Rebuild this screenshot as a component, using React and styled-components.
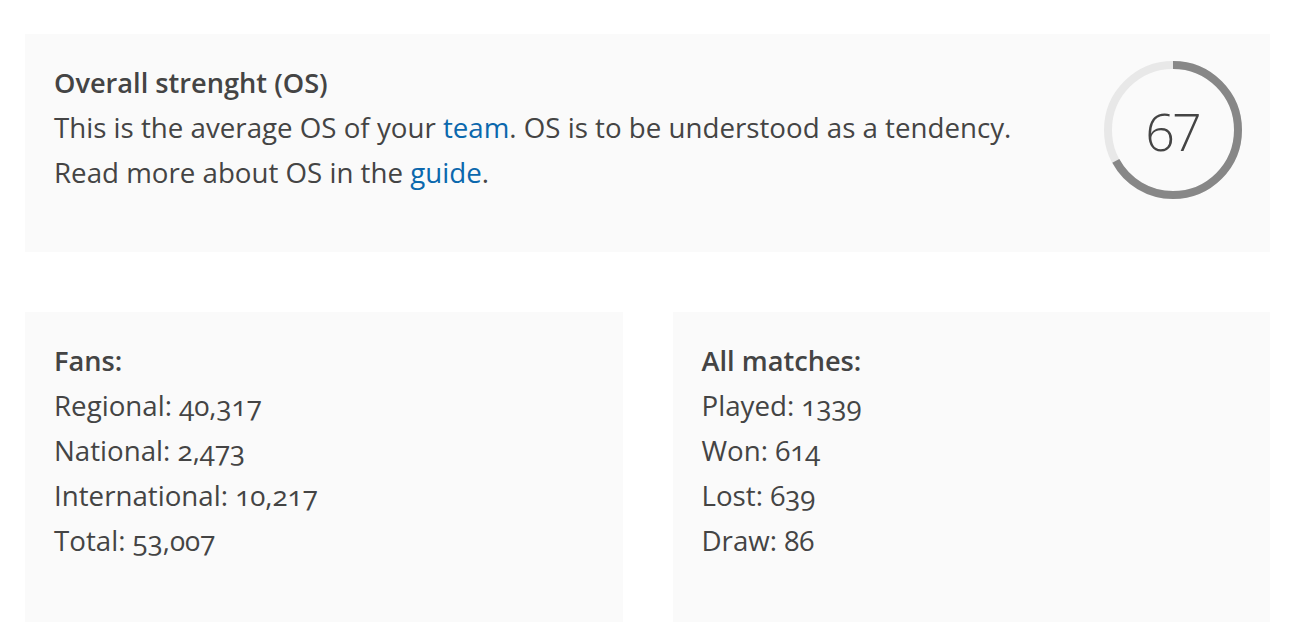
import React from "react";
import styled, { createGlobalStyle } from "styled-components";

const Global = createGlobalStyle`
  html, body { margin: 0; padding: 0; background: #ffffff; }
  body { font-family: "Open Sans", Lato, sans-serif; color: #444444; }
`;

const Page = styled.div`
  padding: 34px 22px 0 25px;
  display: flex;
  flex-direction: column;
  gap: 60px;
`;

const Card = styled.section`
  background: #fafafa;
  padding: ${(p) => p.$pad || "26px 29px"};
  box-sizing: border-box;
  min-height: ${(p) => p.$minH || "auto"};
`;

const TopCard = styled(Card)`
  display: flex;
  align-items: flex-start;
  justify-content: space-between;
  height: 218px;
`;

const Grid = styled.div`
  display: grid;
  grid-template-columns: 1fr 1fr;
  gap: 50px;
`;

const Text = styled.div`
  font-size: 27.7px;
  line-height: 45px;
  font-variant-numeric: oldstyle-nums;
  white-space: nowrap;
`;

const Heading = styled.div`
  font-weight: 600;
  font-size: 27.2px;
  line-height: 45px;
`;

const Link = styled.a`
  color: #0b68ad;
  text-decoration: none;
`;

const Gauge = styled.div`
  position: relative;
  width: 138px;
  height: 138px;
  margin-top: 1px;
  flex-shrink: 0;
`;

const GaugeValue = styled.div`
  position: absolute;
  inset: 0;
  display: flex;
  align-items: center;
  justify-content: center;
  font-size: 52px;
  font-weight: 300;
  letter-spacing: -3px;
  padding-right: 2px;
  color: #444444;
`;

function Ring({ value }) {
  const r = 65;
  const c = 2 * Math.PI * r;
  return (
    <Gauge>
      <svg width="138" height="138" viewBox="0 0 138 138">
        <circle cx="69" cy="69" r={r} fill="none" stroke="#e8e8e8" strokeWidth="8" />
        <circle
          cx="69"
          cy="69"
          r={r}
          fill="none"
          stroke="#878787"
          strokeWidth="8"
          strokeDasharray={`${(c * value) / 100} ${c}`}
          transform="rotate(-90 69 69)"
        />
      </svg>
      <GaugeValue>{value}</GaugeValue>
    </Gauge>
  );
}

export default function App() {
  return (
    <>
      <Global />
      <Page>
        <TopCard $pad="26px 28px 0 29px">
          <Text>
            <Heading>Overall strenght (OS)</Heading>
            <div>
              This is the average OS of your <Link href="#">team</Link>. OS is to be understood as a tendency.
            </div>
            <div>
              Read more about OS in the <Link href="#">guide</Link>.
            </div>
          </Text>
          <Ring value={67} />
        </TopCard>
        <Grid>
          <Card $minH="320px">
            <Heading>Fans:</Heading>
            <Text>Regional: 40,317</Text>
            <Text>National: 2,473</Text>
            <Text>International: 10,217</Text>
            <Text>Total: 53,007</Text>
          </Card>
          <Card $minH="320px">
            <Heading>All matches:</Heading>
            <Text>Played: 1339</Text>
            <Text>Won: 614</Text>
            <Text>Lost: 639</Text>
            <Text>Draw: 86</Text>
          </Card>
        </Grid>
      </Page>
    </>
  );
}
